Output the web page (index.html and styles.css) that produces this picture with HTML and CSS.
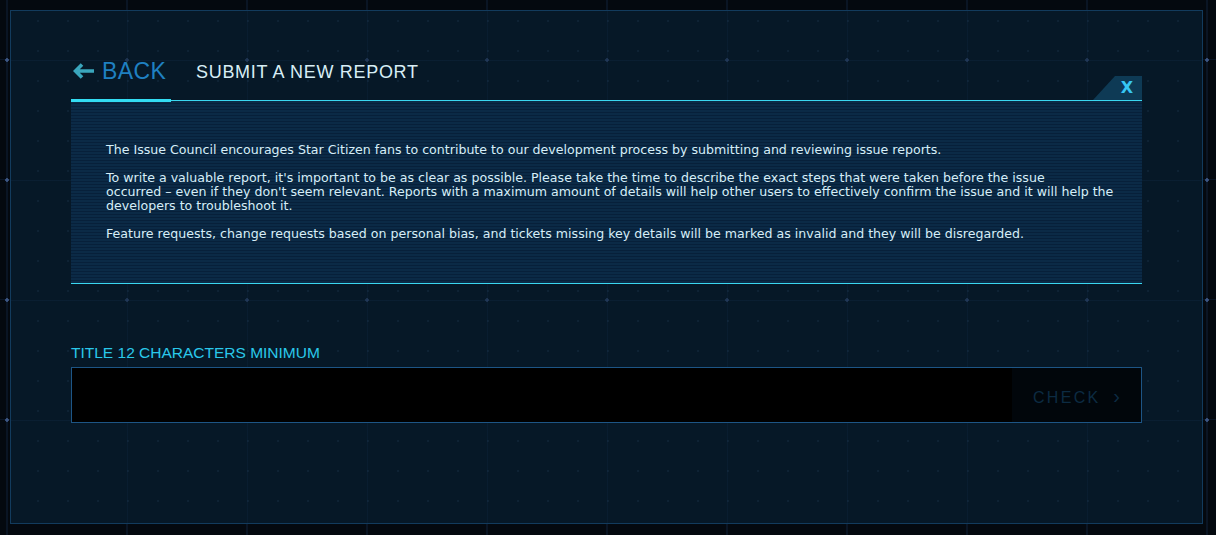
FILE: index.html
```html
<!DOCTYPE html>
<html lang="en">
<head>
    <meta charset="UTF-8">
    <meta name="viewport" content="width=device-width, initial-scale=1.0">
    <title>Submit a New Report</title>
    <link rel="stylesheet" href="styles.css">
</head>
<body>
    <div class="panel">
        <div class="tabs">
            <a href="#" class="back">
                <svg class="back-arrow" width="21" height="16" viewBox="0 0 21 16">
                    <path d="M9 1.5 L2.5 8 L9 14.5 M3 8 H21" fill="none" stroke="#3aa6bd" stroke-width="3.6"/>
                </svg>
                BACK
            </a>
            <h1 class="title">SUBMIT A NEW REPORT</h1>
            <span class="close">X</span>
        </div>

        <div class="intro">
            <p>The Issue Council encourages Star Citizen fans to contribute to our development process by submitting and reviewing issue reports.</p>
            <p>To write a valuable report, it's important to be as clear as possible. Please take the time to describe the exact steps that were taken before the issue<br>occurred &ndash; even if they don't seem relevant. Reports with a maximum amount of details will help other users to effectively confirm the issue and it will help the developers to troubleshoot it.</p>
            <p>Feature requests, change requests based on personal bias, and tickets missing key details will be marked as invalid and they will be disregarded.</p>
        </div>

        <label class="field-label" for="title">TITLE 12 CHARACTERS MINIMUM</label>
        <div class="field">
            <input type="text" id="title" class="field-input">
            <button class="check">CHECK <span class="chev">&rsaquo;</span></button>
        </div>
    </div>
</body>
</html>
```

FILE: styles.css
```css
html, body {
    margin: 0;
    height: 100%;
}
body {
    padding: 10px 13px 11px 10px;
    box-sizing: border-box;
    font-family: "DejaVu Sans", "Liberation Sans", sans-serif;
    background-color: #04090f;
    background-image:
        radial-gradient(circle, #3c5683 1.5px, transparent 2px),
        linear-gradient(to right, #0a1524 2px, transparent 2px),
        linear-gradient(to bottom, #0a1524 1px, transparent 1px);
    background-size: 120px 120px, 120px 120px, 120px 120px;
    background-position: -53px 0, 126px 0, 0 59px;
}
.panel {
    height: 100%;
    box-sizing: border-box;
    border: 1px solid #123b5d;
    padding: 0 60px;
    background-color: #061827;
    background-image:
        radial-gradient(circle, rgba(60, 86, 131, 0.45) 1.5px, transparent 2px),
        radial-gradient(circle, rgba(40, 70, 100, 0.22) 1px, transparent 1.2px),
        linear-gradient(to bottom, rgba(20, 45, 75, 0.3) 1px, transparent 1px),
        linear-gradient(to right, rgba(20, 45, 75, 0.25) 1px, transparent 1px);
    background-size: 120px 120px, 30px 30px, 120px 120px, 120px 120px;
    background-position: -64px -11px, -18px -5px, 0 49px, 116px 0;
}
.tabs {
    height: 89px;
    display: flex;
    align-items: flex-end;
    position: relative;
    z-index: 1;
}
.back {
    width: 100px;
    box-sizing: border-box;
    padding: 0 0 16px 2px;
    margin-bottom: -2px;
    border-bottom: 3px solid #33dcf2;
    display: flex;
    align-items: center;
    gap: 8px;
    color: #1f80c2;
    text-decoration: none;
    font-family: "Liberation Sans", sans-serif;
    font-size: 23px;
    letter-spacing: 0.4px;
    line-height: 24px;
}
.back-arrow {
    flex-shrink: 0;
    margin-top: -1px;
}
.title {
    margin: 0 0 18px 25px;
    font-family: "Liberation Sans", sans-serif;
    font-size: 18px;
    font-weight: normal;
    letter-spacing: 0.7px;
    color: #d8eef6;
    line-height: 20px;
}
.close {
    margin-left: auto;
    width: 49px;
    height: 24px;
    box-sizing: border-box;
    padding-right: 9px;
    background: #0e3a55;
    clip-path: polygon(22px 0, 100% 0, 100% 100%, 0 100%);
    color: #37c6f3;
    font-size: 16px;
    font-weight: bold;
    line-height: 24px;
    text-align: right;
}
.intro {
    border-top: 1px solid #3ad7f0;
    border-bottom: 1px solid #3ad7f0;
    padding: 42px 20px 42px 35px;
    background: repeating-linear-gradient(to bottom, #0b2a46 0 2px, #07203a 2px 3px);
    color: #d6eef8;
    font-size: 12.6px;
    line-height: 14px;
}
.intro p {
    margin: 0 0 14px;
}
.intro p:last-child {
    margin-bottom: 0;
}
.field-label {
    display: block;
    margin: 61px 0 6px;
    color: #2ac8ea;
    font-family: "Liberation Sans", sans-serif;
    font-size: 15.5px;
    line-height: 16px;
}
.field {
    display: flex;
    height: 56px;
    box-sizing: border-box;
    border: 1px solid #1d5585;
    background: #000;
}
.field-input {
    flex: 1;
    border: none;
    background: transparent;
    outline: none;
    color: #d6eef8;
    font: inherit;
    padding: 0 14px;
}
.check {
    width: 129px;
    border: none;
    background: #01060b;
    color: #0c2b42;
    font-family: "Liberation Sans", sans-serif;
    font-size: 16px;
    letter-spacing: 2.3px;
    text-align: left;
    padding: 2px 0 0 21px;
}
.chev {
    margin-left: 6px;
    font-size: 20px;
}
```
